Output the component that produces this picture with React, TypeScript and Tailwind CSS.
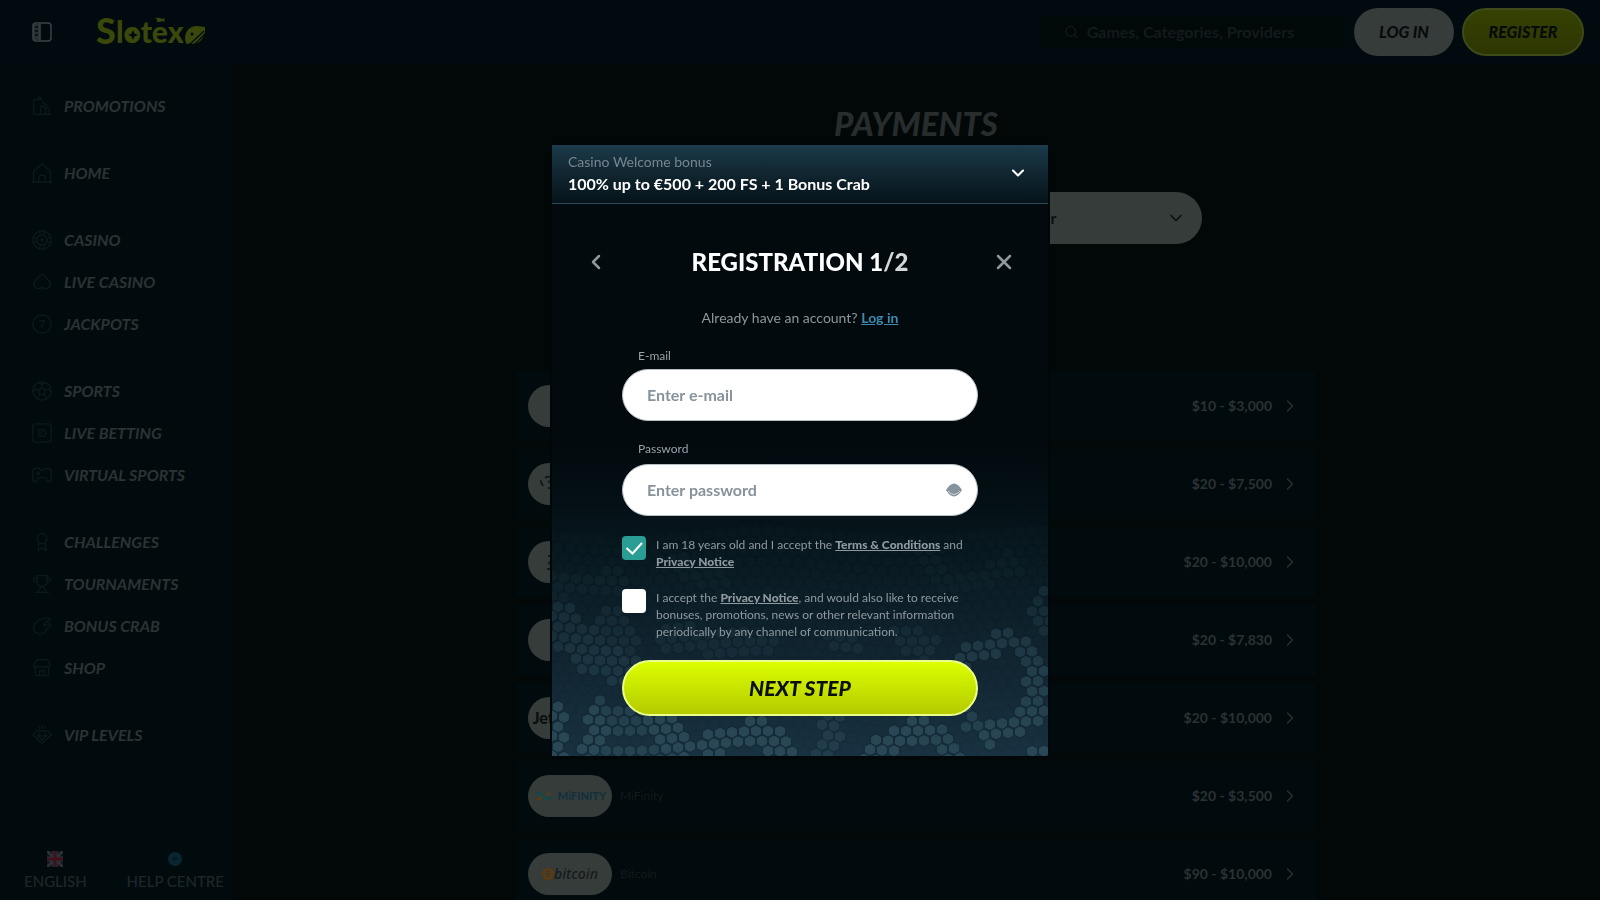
import { useState } from 'react';
import type { ReactNode } from 'react';
import { Award, ChevronDown, ChevronLeft, ChevronRight, Search, Spade, Store, Trophy, X } from 'lucide-react';

type NavItem = { label: string; icon: ReactNode };
type Method = { id: string; name?: string; range: string; logo: ReactNode };

const Glyph = ({ children }: { children: ReactNode }) => (
    <svg viewBox="0 0 24 24" className="size-5" fill="none" stroke="currentColor" strokeWidth="1.5" strokeLinecap="round" strokeLinejoin="round" aria-hidden="true">
        {children}
    </svg>
);

const PromoIcon = () => (
    <Glyph>
        <path d="M2 22h20M2 22V7c0-2 1-3 3-3h7M6 4l3-3 3 3" />
        <path d="M10 22v-6c0-3 1-4 3-4s3 1 3 4v6M16 14c3-1 5 1 5 4v4M12 7l6 4" />
    </Glyph>
);

const HomeIcon = () => (
    <Glyph>
        <path d="M0 23h24M2 23V10L12 1l10 9v13" />
        <path d="M8 23v-4c0-6 8-6 8 0v4" />
    </Glyph>
);

const ChipIcon = () => (
    <Glyph>
        <circle cx="12" cy="12" r="11" />
        <circle cx="12" cy="12" r="6" />
        <path d="M12 10.500 13.500 12 12 13.500 10.500 12z" />
        <path d="M1 9l5 1M1 15l5-1M23 9l-5 1M23 15l-5-1M9 1l1 5M15 1l-1 5M9 23l1-5M15 23l-1-5" />
    </Glyph>
);

const JackpotIcon = () => (
    <Glyph>
        <circle cx="12" cy="12" r="11" />
        <path d="M9 8h6l-3.500 8" />
    </Glyph>
);

const SoccerIcon = () => (
    <Glyph>
        <circle cx="12" cy="12" r="11" />
        <path d="m12 8 4 3-1.500 5h-5L8 11zM12 8V4M16 11l4-2M14.500 16l3 4M9.500 16l-3 4M8 11 4 9M8 2l4 2 4-2M23 13l-3-4M1 13l3-4" />
    </Glyph>
);

const LiveBettingIcon = () => (
    <Glyph>
        <rect x="1" y="1" width="22" height="22" rx="3" />
        <path d="M8 8h6l3 4-3 4H8zM11 10v4" />
    </Glyph>
);

const PadIcon = () => (
    <Glyph>
        <path d="M4 4h5l1 2h4l1-2h5c2 0 3 2 3 5v8c0 4-4 4-5 1l-2-3H8l-2 3c-1 3-5 3-5-1V9c0-3 1-5 3-5Z" />
        <path d="M7 8v4M5 10h4M17 10h.1" />
    </Glyph>
);

const ClawIcon = () => (
    <Glyph>
        <path d="M22 3C14 1 3 5 2 13c-1 6 4 9 9 8 3 0 5-2 6-5l4-3c2-3 1-4-1-4l-6 3 2-5c2 0 5-1 6-4Z" />
    </Glyph>
);

const VipIcon = () => (
    <Glyph>
        <path d="M5 7h14l4 5-11 10L1 12zM6 13h12M9 10l-2 3 5 5 5-5-2-3M8 2l1 2M16 2l-1 2M12 1v3" />
    </Glyph>
);

const navGroups: NavItem[][] = [
    [{ label: 'PROMOTIONS', icon: <PromoIcon /> }],
    [{ label: 'HOME', icon: <HomeIcon /> }],
    [
        { label: 'CASINO', icon: <ChipIcon /> },
        { label: 'LIVE CASINO', icon: <Spade className="size-5" strokeWidth={1.5} /> },
        { label: 'JACKPOTS', icon: <JackpotIcon /> }
    ],
    [
        { label: 'SPORTS', icon: <SoccerIcon /> },
        { label: 'LIVE BETTING', icon: <LiveBettingIcon /> },
        { label: 'VIRTUAL SPORTS', icon: <PadIcon /> }
    ],
    [
        { label: 'CHALLENGES', icon: <Award className="size-5" strokeWidth={1.5} /> },
        { label: 'TOURNAMENTS', icon: <Trophy className="size-5" strokeWidth={1.5} /> },
        { label: 'BONUS CRAB', icon: <ClawIcon /> },
        { label: 'SHOP', icon: <Store className="size-5" strokeWidth={1.5} /> }
    ],
    [{ label: 'VIP LEVELS', icon: <VipIcon /> }]
];

const MiFinityLogo = () => (
    <span className="flex items-center gap-1">
        <svg viewBox="0 0 20 10" className="h-[10px] w-5" aria-hidden="true">
            <path d="M1 2c5-2 7 1 9 3s6 3 9-1c-1 6-8 6-11 3S4 3 1 2Z" fill="#0f4a4c" />
            <path d="M1 8c3 0 4-2 6-3l2 1C7 9 4 10 1 8ZM12 4c2-3 5-3 7-2-2 0-4 1-5 3Z" fill="#5a3d18" />
        </svg>
        <span className="text-[11px] font-black text-[#12303c]">MiFINITY</span>
    </span>
);

const BitcoinLogo = () => (
    <span className="flex items-center">
        <svg viewBox="0 0 14 14" className="size-3" aria-hidden="true">
            <circle cx="7" cy="7" r="7" fill="#5c3a12" />
            <path d="M5 4h3c2 0 2 3 0 3H5h3c3 0 2 3 0 3H5zM6 3v8" fill="none" stroke="#363c3a" />
        </svg>
        <span className="font-['Open_Sans',sans-serif] text-sm leading-5 font-semibold text-[#161c1d] italic">bitcoin</span>
    </span>
);

const methods: Method[] = [
    { id: 'm1', range: '$10 - $3,000', logo: null },
    {
        id: 'm2',
        range: '$20 - $7,500',
        logo: (
            <svg viewBox="0 0 60 24" className="h-6 w-[60px]" fill="none" stroke="#14191a" strokeWidth="2" aria-hidden="true">
                <path d="M5 6c6-4 9 3 3 4 7-1 6 7 0 6M0 8l3 6" />
            </svg>
        )
    },
    {
        id: 'm3',
        range: '$20 - $10,000',
        logo: (
            <svg viewBox="0 0 60 24" className="h-6 w-[60px]" fill="none" stroke="#14191a" strokeWidth="2" aria-hidden="true">
                <path d="M8 6h5M11 6v5l-2 2 2 2v4H7" />
            </svg>
        )
    },
    { id: 'm4', range: '$20 - $7,830', logo: null },
    { id: 'm5', range: '$20 - $10,000', logo: <span className="text-base font-black text-[#0a0f10]">Jetonbank</span> },
    { id: 'm6', name: 'MiFinity', range: '$20 - $3,500', logo: <MiFinityLogo /> },
    { id: 'm7', name: 'Bitcoin', range: '$90 - $10,000', logo: <BitcoinLogo /> }
];

// Scale clusters as capsules: x1, y1, x2, y2, radius, opacity
const clusters = [
    [8, 475, 30, 500, 20, 0.22],
    [30, 510, 70, 525, 18, 0.25],
    [60, 480, 75, 500, 16, 0.16],
    [5, 560, 5, 612, 9, 0.45],
    [45, 575, 38, 612, 12, 0.45],
    [50, 570, 95, 580, 14, 0.35],
    [100, 575, 128, 600, 14, 0.45],
    [60, 612, 110, 612, 12, 0.35],
    [158, 602, 205, 585, 12, 0.45],
    [205, 585, 232, 610, 14, 0.45],
    [282, 575, 275, 612, 12, 0.25],
    [318, 606, 370, 582, 12, 0.45],
    [370, 582, 400, 608, 12, 0.4],
    [408, 515, 458, 495, 12, 0.32],
    [458, 495, 488, 522, 11, 0.32],
    [484, 530, 484, 570, 11, 0.38],
    [480, 572, 432, 592, 11, 0.42],
    [432, 592, 418, 572, 10, 0.35],
    [488, 455, 490, 485, 9, 0.2],
    [120, 495, 210, 502, 14, 0.14],
    [280, 495, 298, 500, 10, 0.15],
    [355, 492, 375, 505, 14, 0.15],
    [5, 442, 60, 438, 13, 0.1],
    [130, 420, 170, 440, 12, 0.08],
    [370, 410, 400, 440, 12, 0.08],
    [420, 440, 460, 420, 12, 0.08],
    [488, 606, 496, 612, 9, 0.45]
];

const distance = (px: number, py: number, [x1, y1, x2, y2]: number[]) => {
    const dx = x2 - x1;
    const dy = y2 - y1;
    const length = dx * dx + dy * dy || 1;
    const t = Math.max(0, Math.min(1, ((px - x1) * dx + (py - y1) * dy) / length));
    return Math.hypot(px - x1 - t * dx, py - y1 - t * dy);
};

const buildScales = () => {
    const scales: { x: number; y: number; opacity: number }[] = [];
    for (let row = 0; row < 24; row++) {
        for (let col = 0; col < 44; col++) {
            const x = col * 12 + (row % 2) * 6;
            const y = 392 + row * 10 + Math.sin(x / 45) * 5;
            const opacity = Math.max(0.04, ...clusters.map((c) => (distance(x, y, c) < c[4] ? c[5] : 0)));
            scales.push({ x, y, opacity });
        }
    }
    return scales;
};

const scales = buildScales();

const ScalePattern = () => (
    <svg viewBox="0 0 496 612" preserveAspectRatio="xMidYMax slice" className="absolute inset-0 size-full" aria-hidden="true">
        {scales.map(({ x, y, opacity }) => (
            <path
                key={`${x}-${y}`}
                d="M-1-5.500Q0-6 1-5.500L4-4Q5.500-3 5.500-2V2Q5.500 3 4 4L1 5.500Q0 6-1 5.500L-4 4Q-5.500 3-5.500 2V-2Q-5.500-3-4-4Z"
                transform={`translate(${x} ${y})`}
                fill="#3f6675"
                stroke="#07141b"
                strokeOpacity="0.6"
                opacity={opacity}
            />
        ))}
    </svg>
);

const Logo = () => (
    <a href="#home" aria-label="Slotexo" className="text-[#3b480b]">
        <svg viewBox="0 0 110 34" className="h-[34px] w-[110px] overflow-visible" fill="currentColor" aria-hidden="true">
            <text x="0" y="29" className="font-['Lato',sans-serif] text-[36px] font-black">S</text>
            <text x="20" y="28" className="font-['Lato',sans-serif] text-[30px] font-black">lotex</text>
            <circle cx="37" cy="20" r="7" />
            <path d="m37 15 1.500 3.500L42 20l-3.500 1.500L37 25l-1.500-3.500L32 20l3.500-1.500Z" fill="#010b0f" />
            <path d="M59 3q4-1 7 1l3-1-1 2 1 2-3-1q-4 2-6 0l2-1z" />
            <path d="M90 28c-3-9 2-17 11-17l8 1c1 8-4 17-12 17l-2-1-4 1Z" />
            <path d="m92 31 16-15M97 31l13-13" stroke="#010b0f" strokeWidth="1.200" />
            <circle cx="96" cy="19" r="1.500" fill="#010b0f" />
        </svg>
    </a>
);

const Header = () => (
    <header className="flex h-16 shrink-0 items-center bg-[#010b0f] px-4">
        <button type="button" aria-label="Toggle menu" className="ml-4 text-[#3a4244]">
            <svg viewBox="0 0 20 20" className="size-5" fill="none" stroke="currentColor" strokeWidth="1.500" aria-hidden="true">
                <rect x="1" y="1" width="18" height="18" rx="3" />
                <path d="M8 1v18" />
                <path d="M1 2h7v16H1z" fill="currentColor" fillOpacity="0.7" stroke="none" />
                <path d="M3 5h3M3 9h3M3 13h3" stroke="#010b0f" />
            </svg>
        </button>
        <div className="ml-11 flex">
            <Logo />
        </div>
        <label className="ml-auto flex h-8 w-[304px] items-center gap-2 bg-[#010808] pl-6 text-[#121b1c]">
            <Search className="size-4" />
            <input
                type="search"
                aria-label="Search games"
                placeholder="Games, Categories, Providers"
                className="w-full bg-transparent text-base font-bold outline-none placeholder:text-[#121b1c]"
            />
        </label>
        <div className="ml-2.5 flex gap-2">
            <button type="button" className="h-12 w-[100px] rounded-full bg-[#363c3a] text-base font-black text-[#060b0c] italic">
                LOG IN
            </button>
            <button type="button" className="h-12 w-[122px] rounded-full border-2 border-[#3e4a17] bg-linear-to-b from-[#364103] to-[#2d3602] text-base font-black text-[#060b0c] italic">
                REGISTER
            </button>
        </div>
    </header>
);

const Sidebar = () => (
    <aside className="flex w-[232px] shrink-0 flex-col bg-[#010b0e]">
        <nav className="flex flex-1 flex-col gap-[25px] overflow-hidden pt-[21px]">
            {navGroups.map((group) => (
                <ul key={group[0].label}>
                    {group.map(({ label, icon }) => (
                        <li key={label}>
                            <a href="#menu" className="flex h-[42px] items-center gap-3 pl-8 text-[#0d1a1b]">
                                {icon}
                                <span className="text-base font-bold text-[#2b3334] italic">{label}</span>
                            </a>
                        </li>
                    ))}
                </ul>
            ))}
        </nav>
        <div className="flex shrink-0 justify-between pr-2 pb-[9px] pl-6 text-[15px] leading-5 font-medium text-[#1e2728]">
            <button type="button" className="flex flex-col items-center gap-1">
                <svg viewBox="0 0 16 16" className="size-4" aria-hidden="true">
                    <rect width="16" height="16" fill="#0c1424" />
                    <path d="m0 0 16 16M16 0 0 16" stroke="#2c3234" strokeWidth="3" />
                    <path d="M8 0v16M0 8h16" stroke="#2c3234" strokeWidth="5" />
                    <path d="M8 0v16M0 8h16" stroke="#420f1e" strokeWidth="3" />
                </svg>
                ENGLISH
            </button>
            <button type="button" className="flex flex-col items-center gap-1">
                <svg viewBox="0 0 16 16" className="size-4" aria-hidden="true">
                    <circle cx="8" cy="8" r="7" fill="#082630" />
                    <path d="M5 7q3-3 6 0l-3 3Z" fill="#061a21" />
                </svg>
                HELP CENTRE
            </button>
        </div>
    </aside>
);

const PaymentsPage = () => (
    <main className="flex flex-1 flex-col items-center overflow-hidden bg-[#010807] px-4 pt-[39px]">
        <h1 className="text-[33px] leading-10 font-black text-[#272c2c] italic">PAYMENTS</h1>
        <div className="mt-[49px] flex w-full max-w-[572px] justify-end">
            <div className="relative w-[280px]">
                <select aria-label="Payment provider" className="h-[52px] w-full appearance-none rounded-full bg-[#363c3a] px-2 text-base font-bold text-[#0a1011]">
                    <option>Payment provider</option>
                </select>
                <ChevronDown className="pointer-events-none absolute top-4 right-4 size-5 text-[#0a1011]" />
            </div>
        </div>
        <ul className="mt-[127px] flex w-full max-w-[800px] flex-col gap-2">
            {methods.map(({ id, name, range, logo }) => (
                <li key={id}>
                    <a href="#method" className="flex h-[70px] items-center bg-[#010b0d] pr-4 pl-3">
                        <span className="flex h-[42px] w-[84px] items-center justify-center overflow-hidden rounded-full bg-[#363c3a]">{logo}</span>
                        {name && <span className="ml-2 text-xs text-[#121a1b]">{name}</span>}
                        <span className="ml-auto text-sm font-bold text-[#2b3233]">{range}</span>
                        <ChevronRight className="ml-2 size-5 text-[#2b3233]" strokeWidth={1.5} />
                    </a>
                </li>
            ))}
        </ul>
    </main>
);

const TermsLink = ({ children }: { children: ReactNode }) => (
    <a href="#terms" className="font-black underline">
        {children}
    </a>
);

type ConsentProps = { id: string; checked: boolean; onChange: (value: boolean) => void; children: ReactNode };

const Consent = ({ id, checked, onChange, children }: ConsentProps) => (
    <div className="flex items-start gap-2.5">
        <span className="relative flex size-6 shrink-0">
            <input
                id={id}
                type="checkbox"
                checked={checked}
                onChange={(e) => onChange(e.target.checked)}
                className="size-6 appearance-none rounded bg-white checked:bg-[#2a9d95]"
            />
            {checked && (
                <svg viewBox="0 0 24 24" className="pointer-events-none absolute inset-0 size-6" fill="none" stroke="white" strokeWidth="2" aria-hidden="true">
                    <path d="m4.500 12 6 5.500L20 7" />
                </svg>
            )}
        </span>
        <label htmlFor={id} className="text-xs leading-[17px] text-[#8f999f]">
            {children}
        </label>
    </div>
);

const RegistrationModal = () => {
    const [adult, setAdult] = useState(true);
    const [marketing, setMarketing] = useState(false);
    const [showPassword, setShowPassword] = useState(false);

    return (
        <div className="fixed inset-0 flex items-center justify-center">
            <div
                role="dialog"
                aria-label="Registration"
                className="relative w-[496px] bg-linear-to-b from-[#020a0e] from-50% to-[#18303f] shadow-[0_0_0_2px_#010708]"
            >
                <ScalePattern />
                <div className="relative">
                    <button
                        type="button"
                        className="flex w-full items-center justify-between border-b border-[#27495a] bg-linear-to-b from-[#1c3a4a] to-[#061319] pt-[7px] pr-5 pb-2 pl-4 text-left"
                    >
                        <span className="flex flex-col">
                            <span className="text-sm leading-5 text-[#76868f]">Casino Welcome bonus</span>
                            <span className="text-base leading-[23px] font-bold text-white">100% up to €500 + 200 FS + 1 Bonus Crab</span>
                        </span>
                        <ChevronDown className="size-5 text-white" strokeWidth={2.5} />
                    </button>

                    <div className="mt-[42px] flex h-8 items-center justify-between px-8">
                        <button type="button" aria-label="Back" className="text-[#8f989b]">
                            <ChevronLeft className="size-6" strokeWidth={2.5} />
                        </button>
                        <h2 className="text-2xl leading-8 font-black text-white">
                            REGISTRATION 1<span className="text-[#d3d8da]">/2</span>
                        </h2>
                        <button type="button" aria-label="Close" className="text-[#8f989b]">
                            <X className="size-6" strokeWidth={2.5} />
                        </button>
                    </div>

                    <p className="mt-[30px] text-center text-sm leading-5 text-[#8d979b]">
                        Already have an account?{' '}
                        <a href="#login" className="font-bold text-[#3e8bb0] underline">
                            Log in
                        </a>
                    </p>

                    <form className="px-[70px] pt-5 pb-10" onSubmit={(e) => e.preventDefault()}>
                        <label htmlFor="email" className="block pl-4 text-xs leading-4 text-[#98a2a8]">
                            E-mail
                        </label>
                        <input
                            id="email"
                            type="email"
                            placeholder="Enter e-mail"
                            className="mt-[5px] block h-[52px] w-full rounded-full border border-[#b8c0c4] bg-white px-6 text-base font-bold text-[#1b2529] outline-none placeholder:text-[#87939c]"
                        />

                        <label htmlFor="password" className="mt-5 block pl-4 text-xs leading-4 text-[#98a2a8]">
                            Password
                        </label>
                        <div className="relative mt-[7px]">
                            <input
                                id="password"
                                type={showPassword ? 'text' : 'password'}
                                placeholder="Enter password"
                                className="block h-[52px] w-full rounded-full border border-[#b8c0c4] bg-white px-6 text-base font-bold text-[#1b2529] outline-none placeholder:text-[#87939c]"
                            />
                            <button type="button" aria-label="Show password" onClick={() => setShowPassword(!showPassword)} className="absolute top-[18px] right-4">
                                <svg viewBox="0 0 16 16" className="size-4" aria-hidden="true">
                                    <path d="M0 8q8-13 16 0Q8 21 0 8Z" fill="#87939c" />
                                    <path d="M2 9q6 7 12 0" fill="none" stroke="#cfd5d9" />
                                </svg>
                            </button>
                        </div>

                        <div className="mt-5 flex flex-col gap-[19px]">
                            <Consent id="adult" checked={adult} onChange={setAdult}>
                                I am 18 years old and I accept the <TermsLink>Terms &amp; Conditions</TermsLink> and <TermsLink>Privacy Notice</TermsLink>
                            </Consent>
                            <Consent id="marketing" checked={marketing} onChange={setMarketing}>
                                I accept the <TermsLink>Privacy Notice</TermsLink>, and would also like to receive bonuses, promotions, news or other relevant information
                                periodically by any channel of communication.
                            </Consent>
                        </div>

                        <button
                            type="submit"
                            className="mt-5 h-14 w-full rounded-full border-2 border-[#ecff8c] bg-linear-to-b from-[#dcff00] to-[#b4cb00] text-[21px] font-black text-[#0a1011] italic"
                        >
                            NEXT STEP
                        </button>
                    </form>
                </div>
            </div>
        </div>
    );
};

const App = () => (
    <div className="flex h-screen flex-col overflow-hidden bg-[#010807] font-['Lato',sans-serif]">
        <Header />
        <div className="flex min-h-0 flex-1">
            <Sidebar />
            <PaymentsPage />
        </div>
        <RegistrationModal />
    </div>
);

export default App;
